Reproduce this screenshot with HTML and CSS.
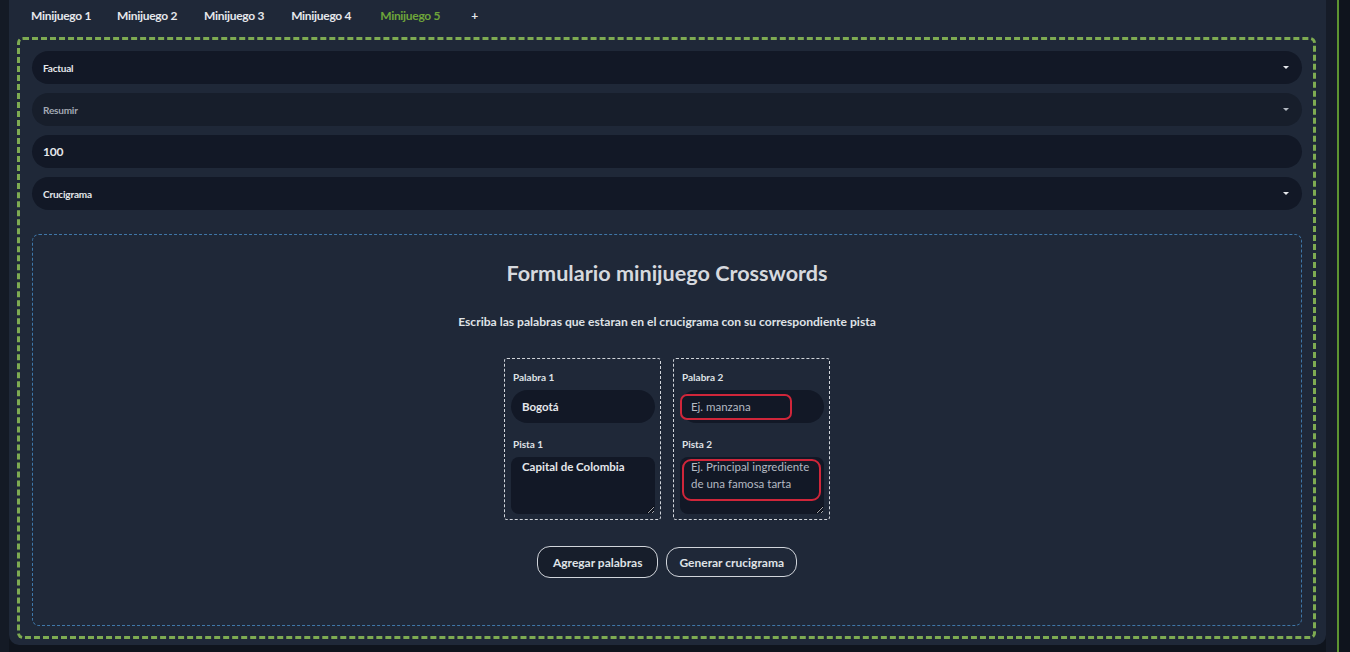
FILE: index.html
```html
<!DOCTYPE html>
<html lang="es">
<head>
<meta charset="utf-8">
<title>Minijuegos</title>
<link rel="stylesheet" href="styles.css">
</head>
<body>
<div class="layout">
  <div class="edge-left"></div>
  <div class="card">
    <nav class="tabs">
      <span class="tab">Minijuego 1</span>
      <span class="tab">Minijuego 2</span>
      <span class="tab">Minijuego 3</span>
      <span class="tab">Minijuego 4</span>
      <span class="tab active">Minijuego 5</span>
      <span class="tab plus">+</span>
    </nav>
    <div class="frame">
      <div class="field select"><span>Factual</span><svg class="caret" width="6" height="3" viewBox="0 0 6 3"><path d="M0 0h6L3 3z" fill="#e5e7eb"/></svg></div>
      <div class="field select muted"><span>Resumir</span><svg class="caret" width="6" height="3" viewBox="0 0 6 3"><path d="M0 0h6L3 3z" fill="#b4b9c2"/></svg></div>
      <div class="field number"><span>100</span></div>
      <div class="field select"><span>Crucigrama</span><svg class="caret" width="6" height="3" viewBox="0 0 6 3"><path d="M0 0h6L3 3z" fill="#e5e7eb"/></svg></div>

      <section class="game">
        <h2 class="title">Formulario minijuego Crosswords</h2>
        <p class="subtitle">Escriba las palabras que estaran en el crucigrama con su correspondiente pista</p>
        <div class="words">
          <div class="word">
            <label class="lbl">Palabra 1</label>
            <input class="inp" type="text" value="Bogotá">
            <label class="lbl lbl2">Pista 1</label>
            <textarea class="txt">Capital de Colombia</textarea>
          </div>
          <div class="word">
            <label class="lbl">Palabra 2</label>
            <input class="inp" type="text" placeholder="Ej. manzana">
            <label class="lbl lbl2">Pista 2</label>
            <textarea class="txt" placeholder="Ej. Principal ingrediente de una famosa tarta"></textarea>
            <span class="mark mark-inp"></span>
            <span class="mark mark-txt"></span>
          </div>
        </div>
        <div class="actions">
          <button class="btn btn-add">Agregar palabras</button>
          <button class="btn btn-gen">Generar crucigrama</button>
        </div>
      </section>
    </div>
  </div>
  <div class="edge-right"></div>
  <div class="rail"></div>
</div>
</body>
</html>
```

FILE: styles.css
```css
* { box-sizing: border-box; }
html, body { margin: 0; padding: 0; }
body {
  background: #0f141d;
  font-family: "Lato", "Liberation Sans", sans-serif;
  color: #e5e7eb;
  width: 1350px;
  height: 652px;
  overflow: hidden;
}
.layout { display: flex; height: 652px; }
.edge-left { width: 9px; background: #141a25; }
.card {
  width: 1317px;
  height: 645px;
  background: #1f2838;
  border-radius: 0 0 10px 10px;
  display: flex;
  flex-direction: column;
}
.edge-right { width: 11px; background: #161c28; }
.rail { width: 2px; background: #5d9432; }

.tabs {
  height: 37px;
  display: flex;
  align-items: flex-start;
  padding: 9px 0 0 22px;
}
.tab {
  font-weight: 700;
  font-size: 12px;
  letter-spacing: -0.3px;
  color: #e5e7eb;
  margin-right: 26px;
  line-height: 14px;
}
.tab:nth-child(2), .tab:nth-child(3) { margin-right: 27px; }
.tab:nth-child(4) { margin-right: 29px; }
.tab.active { color: #6ea53a; margin-right: 31px; }

.frame {
  margin: 0 10px 6px 8px;
  flex: 1;
  border: 3px dashed #7eab52;
  border-radius: 6px;
  padding: 11px 11px 10px 12px;
  display: flex;
  flex-direction: column;
  gap: 9px;
}
.field {
  height: 33px;
  border-radius: 17px;
  background: #121826;
  display: flex;
  align-items: center;
  justify-content: space-between;
  padding: 0 13px 0 11px;
  font-weight: 700;
  font-size: 10px;
  letter-spacing: -0.2px;
  color: #e5e7eb;
}
.field.muted { background: #171e2b; color: #a3a9b3; }
.field.number { font-size: 12px; }

.game {
  margin-top: 15px;
  flex: 1;
  border: 1px dashed #3f77a8;
  border-radius: 7px;
  display: flex;
  flex-direction: column;
  align-items: center;
  padding-top: 24px;
}
.title {
  margin: 0;
  font-size: 21.6px;
  font-weight: 700;
  color: #d6d9de;
  letter-spacing: 0;
  line-height: 28px;
}
.subtitle {
  margin: 28px 0 0;
  font-size: 12.1px;
  font-weight: 700;
  color: #dfe2e6;
  letter-spacing: 0;
  line-height: 14px;
}
.words {
  margin-top: 29px;
  display: flex;
  gap: 12px;
}
.word {
  position: relative;
  width: 157px;
  height: 162px;
  border: 1px dashed #d1d5db;
  border-radius: 3px;
  padding: 12px 5px 5px 6px;
  display: flex;
  flex-direction: column;
}
.lbl {
  font-size: 10px;
  font-weight: 700;
  color: #dfe2e6;
  line-height: 12px;
  padding-left: 2px;
}
.lbl2 { margin-top: 15px; }
.inp {
  margin-top: 7px;
  height: 33px;
  width: 144px;
  border: none;
  outline: none;
  border-radius: 17px;
  background: #121826;
  color: #e5e7eb;
  font-family: inherit;
  font-weight: 700;
  font-size: 11.5px;
  padding: 0 11px;
}
.inp::placeholder, .txt::placeholder { color: #b4b9c2; font-weight: 400; }
.txt {
  margin-top: 7px;
  height: 57px;
  width: 144px;
  border: none;
  outline: none;
  border-radius: 8px;
  background: #121826;
  color: #e5e7eb;
  font-family: inherit;
  font-weight: 700;
  font-size: 11.5px;
  line-height: 17px;
  padding: 1px 11px;
  resize: vertical;
}
.mark {
  position: absolute;
  border: 2px solid #d0263a;
  border-radius: 7px;
}
.mark-inp { left: 6px; top: 35px; width: 112px; height: 26px; }
.mark-txt { left: 8px; top: 100px; width: 139px; height: 42px; border-radius: 9px; }

.actions {
  margin-top: 26px;
  display: flex;
  gap: 8px;
  align-items: center;
}
.btn {
  font-family: inherit;
  font-weight: 700;
  font-size: 12px;
  color: #dfe2e6;
  background: #1f2838;
  border: 1px solid #d1d5db;
  border-radius: 13px;
  height: 30px;
  padding: 0 14px;
}
.btn-add { background: #171e2b; height: 32px; padding: 0 15px; }
.btn-gen { padding: 0 12px; }
```
